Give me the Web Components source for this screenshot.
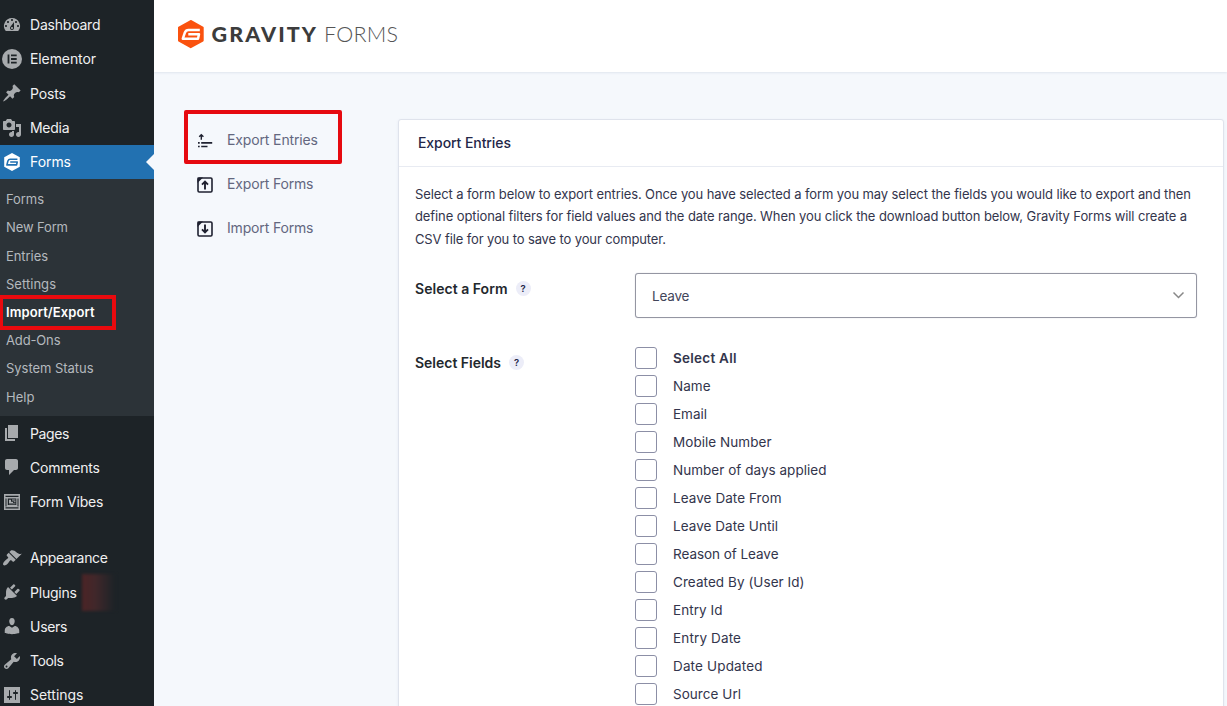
<!DOCTYPE html>
<html lang="en">
<head>
<meta charset="utf-8">
<title>Export Entries</title>
<style>
html,body{margin:0;height:100%;overflow:hidden}
body{font-family:Inter,"Liberation Sans",sans-serif;background:#f5f8fc}
</style>
</head>
<body>
<export-page></export-page>
<script>
const ICONS = {
dashboard:'<path fill-rule="evenodd" d="M3.76 16h12.48A7.998 7.998 0 0 0 10 3a7.998 7.998 0 0 0-6.24 13zM10 4c.55 0 1 .45 1 1s-.45 1-1 1-1-.45-1-1 .45-1 1-1zM6 6c.55 0 1 .45 1 1s-.45 1-1 1-1-.45-1-1 .45-1 1-1zm8 0c.55 0 1 .45 1 1s-.45 1-1 1-1-.45-1-1 .45-1 1-1zm-5.37 5.55L12 7v6c0 1.1-.9 2-2 2s-2-.9-2-2c0-.57.24-1.08.63-1.45zM4 10c.55 0 1 .45 1 1s-.45 1-1 1-1-.45-1-1 .45-1 1-1zm12 0c.55 0 1 .45 1 1s-.45 1-1 1-1-.45-1-1 .45-1 1-1zm-5 3c0-.55-.45-1-1-1s-1 .45-1 1 .45 1 1 1 1-.45 1-1z"/>',
elementor:'<circle cx="10" cy="10" r="10"/><path fill="#1d2327" d="M5.6 5.5h1.8v9H5.6zM9 5.5h5.7v1.8H9zM9 9.1h5.7v1.8H9zM9 12.7h5.7v1.8H9z"/>',
posts:'<path d="M10.44 3.02l1.82-1.82 6.36 6.35-1.83 1.82c-1.05-.68-2.48-.57-3.41.36l-.75.75c-.92.93-1.04 2.35-.35 3.41l-1.83 1.82-2.41-2.41-2.8 2.79c-.42.42-3.38 2.71-3.8 2.29s1.86-3.39 2.28-3.81l2.79-2.79L4.1 9.36l1.83-1.82c1.05.69 2.48.57 3.4-.36l.75-.75c.93-.92 1.05-2.35.36-3.41z"/>',
media:'<path d="M13 11V4c0-.55-.45-1-1-1h-1.67L9 1H5L3.67 3H2c-.55 0-1 .45-1 1v7c0 .55.45 1 1 1h10c.55 0 1-.45 1-1zM7 4.5c1.38 0 2.5 1.12 2.5 2.5S8.38 9.5 7 9.5 4.5 8.38 4.5 7 5.62 4.5 7 4.5zM14 6h5v10.5c0 1.38-1.12 2.5-2.5 2.5S14 17.88 14 16.5s1.12-2.5 2.5-2.5c.17 0 .34.02.5.05V9h-3V6zm-4 8.05V13h2v3.5c0 1.38-1.12 2.5-2.5 2.5S7 17.88 7 16.5 8.12 14 9.5 14c.17 0 .34.02.5.05z"/>',
forms:'<path d="M10 1l7.8 4.3v9.4L10 19l-7.8-4.3V5.3z"/><path fill="none" stroke="#2271b1" stroke-width="1.6" stroke-linejoin="round" d="M15.4 7.3H8.300c-1.200 0-2 .6-2.400 1.700L4.900 12.900h9.700l.6-2.900H8.200"/>',
pages:'<path d="M6 15V2h10v13H6zm-1 1h8v2H3V5h2v11z"/>',
comments:'<path d="M5 2h9c1.1 0 2 .9 2 2v7c0 1.1-.9 2-2 2h-2l-5 5v-5H5c-1.1 0-2-.9-2-2V4c0-1.1.9-2 2-2z"/>',
vibes:'<path fill-rule="evenodd" d="M2 2h16v16H2zM3.500 3.700v1.300h13V3.700zM3.500 6.500v8h1v-8zM15.500 6.500v8h1v-8zM5.800 6.500v6.600h8.500V6.500zM3.500 15.300v1.200h13v-1.200z"/><path d="M7 7.700h2v2h2v1.300H7zM10 7.500h3.500v1H10zM11.700 9.300h1.800v.9h-1.800zM7 11.600h6.500v.7H7z"/>',
appearance:'<path d="M14.48 11.06L7.41 3.99l1.5-1.5c.5-.56 2.3-.47 3.51.32 1.21.8 1.43 1.28 2.91 2.1 1.18.64 2.45 1.26 4.45.85zm-.71.71L6.7 4.7 4.93 6.47c-.39.39-.39 1.02 0 1.41l1.06 1.06c.39.39.39 1.03 0 1.42-.6.6-1.43 1.11-2.21 1.69-.35.26-.7.53-1.01.84C1.43 14.23.4 16.08 1.4 17.07c.99 1 2.84-.03 4.18-1.36.31-.31.58-.66.85-1.02.57-.78 1.08-1.61 1.69-2.21.39-.39 1.02-.39 1.41 0l1.06 1.06c.39.39 1.02.39 1.41 0z"/>',
plugins:'<path d="M13.11 4.36L9.87 7.6 8 5.73l3.24-3.24c.35-.34 1.05-.2 1.56.32.52.51.66 1.21.31 1.55zm-8 1.77l.91-1.12 9.01 9.01-1.19.84c-.71.71-2.63 1.16-3.82 1.16H6.14L4.9 17.26c-.59.59-1.54.59-2.12 0-.59-.58-.59-1.53 0-2.12l1.24-1.24v-3.88c0-1.13.4-3.19 1.09-3.89zm7.26 3.97l3.24-3.24c.34-.35 1.04-.21 1.55.31.52.51.66 1.21.31 1.55l-3.24 3.25z"/>',
users:'<path d="M10 9.25c-2.27 0-2.73-3.44-2.73-3.44C7 4.02 7.82 2 9.97 2c2.16 0 2.98 2.02 2.71 3.81 0 0-.41 3.44-2.68 3.44zm0 2.57L12.72 10c2.39 0 4.52 2.33 4.52 4.53v2.49s-3.65 1.13-7.24 1.13c-3.65 0-7.24-1.13-7.24-1.13v-2.49c0-2.25 1.94-4.48 4.47-4.48z"/>',
tools:'<path d="M16.68 9.77c-1.34 1.34-3.3 1.67-4.95.99l-5.41 6.52c-.99.99-2.59.99-3.58 0s-.99-2.59 0-3.57l6.52-5.42c-.68-1.65-.35-3.61.99-4.95 1.28-1.28 3.12-1.62 4.72-1.06l-2.89 2.89 2.82 2.82 2.86-2.87c.53 1.58.18 3.39-1.08 4.65zM3.81 16.21c.4.39 1.04.39 1.43 0 .4-.4.4-1.04 0-1.43-.39-.4-1.03-.4-1.43 0-.39.39-.39 1.03 0 1.43z"/>',
settings:'<path fill-rule="evenodd" d="M18 18V2H2v16zM8 11h1c.55 0 1 .45 1 1s-.45 1-1 1H8v1.5c0 .28-.22.5-.5.5s-.5-.22-.5-.5V13H6c-.55 0-1-.45-1-1s.45-1 1-1h1V5.5c0-.28.22-.5.5-.5s.5.22.5.5V11zm5-2h-1c-.55 0-1-.45-1-1s.45-1 1-1h1V5.5c0-.28.22-.5.5-.5s.5.22.5.5V7h1c.55 0 1 .45 1 1s-.45 1-1 1h-1v5.5c0 .28-.22.5-.5.5s-.5-.22-.5-.5V9z"/>',
exportEntries:'<g fill="none" stroke="#1f2130" stroke-width="1.7"><path d="M6.300 8.800V3.600M4.200 5.800l2.100-2.100 2.100 2.100" stroke-width="1.400"/><path d="M3 11.900h1.700M6.200 11.900h11M3 15.500h1.700M6.200 15.500h6.300"/></g>',
exportForms:'<rect x="3" y="3" width="14" height="14" rx="1.2" fill="none" stroke="#1f2130" stroke-width="1.6"/><path fill="#1f2130" d="M2.500 2.500h5.500L2.500 8z"/><path fill="none" stroke="#1f2130" stroke-width="1.900" d="M10 14.500V7M7 9.700l3-3 3 3"/>',
importForms:'<rect x="3" y="3" width="14" height="14" rx="1.2" fill="none" stroke="#1f2130" stroke-width="1.6"/><path fill="#1f2130" d="M2.500 2.500h5.500L2.500 8z"/><path fill="none" stroke="#1f2130" stroke-width="1.900" d="M10 5.500V13M7 10.400l3 3 3-3"/>'
};

function define(name, html, setup) {
  const t = document.createElement('template');
  t.innerHTML = html;
  customElements.define(name, class extends HTMLElement {
    connectedCallback() {
      if (this.shadowRoot) return;
      this.attachShadow({mode: 'open'}).append(t.content.cloneNode(true));
      if (setup) setup.call(this, this.shadowRoot);
    }
  });
}

/* A single line of text; "w" sets its width by tracking. */
define('ui-text', '<style>:host{display:inline-block;white-space:nowrap}</style><slot></slot>', function () {
  const w = parseFloat(this.getAttribute('w'));
  if (!w) return;
  const n = this.textContent.length;
  const now = this.getBoundingClientRect().width;
  this.style.letterSpacing = ((w - now) / (n - 1)).toFixed(3) + 'px';
  this.style.marginRight = -((w - now) / (n - 1)).toFixed(3) + 'px';
});

define('ui-icon', '<style>:host{display:block;width:20px;height:20px;flex:none}svg{display:block;width:100%;height:100%;fill:currentColor}</style><svg viewBox="0 0 20 20"></svg>', function (r) {
  r.querySelector('svg').innerHTML = ICONS[this.getAttribute('name')];
});

define('menu-item', `<style>
:host{display:flex;align-items:center;position:relative;height:34.2px;padding-left:2px;gap:8px;font-size:14px;color:#f0f0f1;box-sizing:border-box}
ui-icon{color:#a7aaad}
:host([up]) ::slotted(*){margin-top:-2px}
:host([active]){background:#2271b1;color:#fff}
:host([active]) ui-icon{color:#fff}
:host([active])::after{content:"";position:absolute;right:0;top:9px;border:8px solid transparent;border-right-color:#f5f8fc;border-left:0}
i{display:none}
:host([badge]) i{display:block;position:absolute;left:82px;top:-1px;width:34px;height:37px;background:linear-gradient(90deg,#4c2426,#40272a 40%,#1d2327 95%);filter:blur(1.5px)}
</style><ui-icon></ui-icon><slot></slot><i></i>`, function (r) {
  r.querySelector('ui-icon').shadowRoot.querySelector('svg').innerHTML = ICONS[this.getAttribute('icon')];
});

define('sub-item', `<style>
:host{display:flex;align-items:center;position:relative;height:28.2px;padding-left:6px;font-size:13px;color:#b4b9be}
:host([up]) ::slotted(*){margin-top:-1.5px}
:host([current]){color:#fff;font-weight:600}
:host([current])::after{content:"";position:absolute;left:-1px;top:-3px;width:109px;height:27px;border:4px solid #ea0a0e}
</style><slot></slot>`);

define('admin-menu', `<style>
:host{display:flex;flex-direction:column;width:154px;height:706px;overflow:hidden;box-sizing:border-box;padding-top:8px;background:#1d2327}
menu-item,sub-item{flex:none}
nav{flex:none;background:#2c3338;padding:6.3px 0 5.4px}
hr{flex:none;width:100%;height:22.3px;margin:0;border:0}
</style>
<menu-item icon="dashboard" up><ui-text w="70.5">Dashboard</ui-text></menu-item>
<menu-item icon="elementor" up><ui-text w="66">Elementor</ui-text></menu-item>
<menu-item icon="posts"><ui-text w="36">Posts</ui-text></menu-item>
<menu-item icon="media"><ui-text w="39.5">Media</ui-text></menu-item>
<menu-item icon="forms" active><ui-text w="41">Forms</ui-text></menu-item>
<nav>
<sub-item><ui-text w="38">Forms</ui-text></sub-item>
<sub-item up><ui-text w="62">New Form</ui-text></sub-item>
<sub-item><ui-text w="42">Entries</ui-text></sub-item>
<sub-item><ui-text w="50">Settings</ui-text></sub-item>
<sub-item current><ui-text w="88.5">Import/Export</ui-text></sub-item>
<sub-item><ui-text w="54.5">Add-Ons</ui-text></sub-item>
<sub-item><ui-text w="87.5">System Status</ui-text></sub-item>
<sub-item><ui-text w="28.5">Help</ui-text></sub-item>
</nav>
<menu-item icon="pages"><ui-text w="39.5">Pages</ui-text></menu-item>
<menu-item icon="comments"><ui-text w="70">Comments</ui-text></menu-item>
<menu-item icon="vibes"><ui-text w="73.5">Form Vibes</ui-text></menu-item>
<hr>
<menu-item icon="appearance" up><ui-text w="78">Appearance</ui-text></menu-item>
<menu-item icon="plugins" badge><ui-text w="47">Plugins</ui-text></menu-item>
<menu-item icon="users"><ui-text w="37.5">Users</ui-text></menu-item>
<menu-item icon="tools"><ui-text w="34">Tools</ui-text></menu-item>
<menu-item icon="settings"><ui-text w="53.5">Settings</ui-text></menu-item>`);

define('brand-header', `<style>
:host{display:flex;align-items:center;height:72px;box-sizing:border-box;padding:0 0 4px 23px;background:#fff;box-shadow:0 1px 2px #dfe5ee}
svg{display:block}
text{font-family:Lato,Inter,sans-serif;font-size:21.5px}
</style>
<svg width="224" height="32" viewBox="0 0 224 32">
<path fill="#fa520f" stroke="#fa520f" stroke-width="2" stroke-linejoin="round" d="M13.7 3l12 6.600v13L13.700 29.200 2 22.600v-13z"/>
<path fill="none" stroke="#fff" stroke-width="2.500" stroke-linejoin="round" d="M22.800 11.900H11.500c-1.900 0-3 .9-3.600 2.600L5.800 20.700h15.200l1-4.500H11.300"/>
<text x="34.5" y="23.500" font-weight="900" fill="#3c3c3c" textLength="104.5">GRAVITY</text>
<text x="147" y="23.500" font-weight="300" fill="#555" textLength="74">FORMS</text>
</svg>`);

define('tab-link', `<style>
:host{display:flex;align-items:center;position:relative;height:44px;padding-left:11px;gap:12px;font-size:14px;color:#63677f}
ui-icon{position:relative;top:1px}
:host([current])::after{content:"";position:absolute;left:0;top:-8px;width:150px;height:46px;border:4px solid #e60a10;border-radius:2px}
::slotted(*){margin-top:-2px}
</style><ui-icon></ui-icon><slot></slot>`, function (r) {
  r.querySelector('ui-icon').shadowRoot.querySelector('svg').innerHTML = ICONS[this.getAttribute('icon')];
});

define('tip-mark', `<style>:host{display:flex;align-items:center;justify-content:center;width:15px;height:15px;border-radius:50%;background:#ecedf8;color:#242748;font-size:9.5px;font-weight:600}</style>?`);

define('form-row', `<style>
:host{display:grid;grid-template-columns:220px 562px}
header{display:flex;align-items:center;gap:8px;height:20px;padding-top:var(--label-top,6px);font-size:14px;font-weight:600;color:#23282d}
</style><header><slot name="label"></slot><tip-mark></tip-mark></header><div><slot></slot></div>`);

define('select-box', `<style>
:host{display:flex;align-items:center;justify-content:space-between;box-sizing:border-box;height:45px;border:1px solid #9496a2;border-radius:3px;padding:1px 11px 0 16px;font-size:13.5px;color:#42455a;background:#fff;box-shadow:0 0 1px #b5b6c4}
</style><slot></slot><svg width="13" height="9" viewBox="0 0 13 9"><path fill="none" stroke="#888" stroke-width="1.5" d="M1.5 1.5l5 5 5-5"/></svg>`);

define('check-item', `<style>
:host{display:flex;align-items:center;height:28px;gap:16px;font-size:13.5px;color:#33354c}
:host([bold]){font-weight:600}
i{box-sizing:border-box;width:22px;height:22px;border:1px solid #8c8fa6;border-radius:3px;background:#fff}
</style><i></i><slot></slot>`);

define('settings-card', `<style>
:host{display:block;box-sizing:border-box;width:826px;height:620px;border:1px solid #dfe3ec;border-radius:3px;background:#fff;box-shadow:0 1px 3px #e6eaf2}
h2{display:flex;align-items:center;height:46px;margin:0;padding-left:19px;border-bottom:1px solid #e8ebf2;font-size:14px;font-weight:500;color:#242748}
h2 ui-text{margin-top:-2px}
p{display:flex;flex-direction:column;margin:16px 0 0 16px;font-size:13px;line-height:22.3px;color:#33354c}
p ui-text{align-self:flex-start}
form-row{margin-left:16px}
.a{margin-top:23px}
.b{margin-top:26px;--label-top:9px}
</style>
<h2><ui-text w="93">Export Entries</ui-text></h2>
<p><ui-text w="776">Select a form below to export entries. Once you have selected a form you may select the fields you would like to export and then</ui-text>
<ui-text w="772">define optional filters for field values and the date range. When you click the download button below, Gravity Forms will create a</ui-text>
<ui-text w="251">CSV file for you to save to your computer.</ui-text></p>
<form-row class="a"><ui-text slot="label" w="92.5">Select a Form</ui-text><select-box><ui-text w="37.5">Leave</ui-text></select-box></form-row>
<form-row class="b"><ui-text slot="label" w="86">Select Fields</ui-text>
<check-item bold><ui-text w="63.5">Select All</ui-text></check-item>
<check-item><ui-text w="37.5">Name</ui-text></check-item>
<check-item><ui-text w="34">Email</ui-text></check-item>
<check-item><ui-text w="98.5">Mobile Number</ui-text></check-item>
<check-item><ui-text w="153.5">Number of days applied</ui-text></check-item>
<check-item><ui-text w="108.5">Leave Date From</ui-text></check-item>
<check-item><ui-text w="105">Leave Date Until</ui-text></check-item>
<check-item><ui-text w="105.5">Reason of Leave</ui-text></check-item>
<check-item><ui-text w="131.5">Created By (User Id)</ui-text></check-item>
<check-item><ui-text w="49.5">Entry Id</ui-text></check-item>
<check-item><ui-text w="68">Entry Date</ui-text></check-item>
<check-item><ui-text w="89.5">Date Updated</ui-text></check-item>
<check-item><ui-text w="68">Source Url</ui-text></check-item>
</form-row>`);

define('export-page', `<style>
:host{display:grid;grid-template-columns:154px 1fr;width:1227px;height:706px;overflow:hidden}
main{min-width:0;height:706px;overflow:hidden}
section{display:grid;grid-template-columns:214px 826px;padding:46px 0 0 30px}
settings-card{margin-top:1px}
</style>
<admin-menu></admin-menu>
<main><brand-header></brand-header>
<section><div>
<tab-link icon="exportEntries" current><ui-text w="91">Export Entries</ui-text></tab-link>
<tab-link icon="exportForms"><ui-text w="86.5">Export Forms</ui-text></tab-link>
<tab-link icon="importForms"><ui-text w="86.5">Import Forms</ui-text></tab-link>
</div><settings-card></settings-card></section></main>`);
</script>
</body>
</html>
